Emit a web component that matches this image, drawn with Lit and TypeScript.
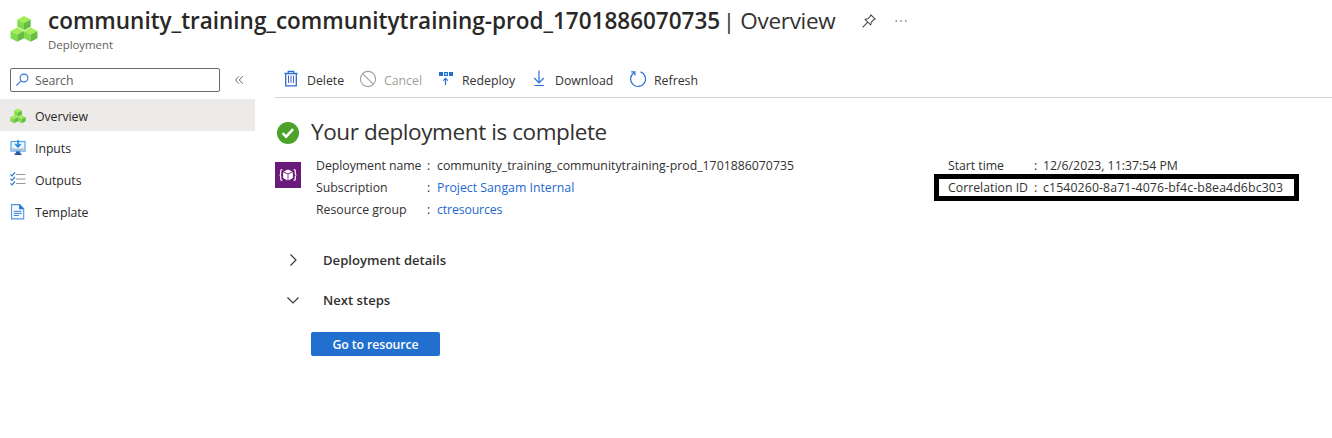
import { LitElement, html, css, svg } from "lit";
import { customElement } from "lit/decorators.js";

const cube = (x: number, y: number) => svg`
  <g transform="translate(${x} ${y})">
    <path d="M7 0 L14 3.6 L7 7.3 L0 3.6Z" fill="#a4ee55"/>
    <path d="M0 3.6 L7 7.3 V15 L0 11.3Z" fill="#7fdc4c"/>
    <path d="M14 3.6 L7 7.3 V15 L14 11.3Z" fill="#68bd40"/>
  </g>`;

const cubes = (size: number) => html`
  <svg width=${size} height=${size} viewBox="-.6 -.6 29.200 29.200">${cube(7, 0.4)}${cube(0, 12.4)}${cube(14, 12.4)}</svg>`;

const inputsIcon = html`
  <svg width="16" height="16" viewBox="0 0 16 16">
    <path d="M6 11h4l.3 3H5.700z" fill="#2b5db0"/>
    <rect x="4.500" y="13.500" width="7" height="1.500" fill="#2b50a0"/>
    <rect x="1" y="1.500" width="14" height="9.500" fill="#e9f4fd" stroke="#55a5e6" stroke-width="1.200"/>
    <path d="M3 8v1.300h10V8" fill="none" stroke="#a8a8a8" stroke-width="1"/>
    <path d="M8 0v6M5.300 4 8 6.800 10.700 4" fill="none" stroke="#1a86dc" stroke-width="1.500"/>
  </svg>`;

const outputsIcon = html`
  <svg width="16" height="16" viewBox="0 0 16 16">
    <path d="M6 2.500h9.500M6 7h9.500M6 11.500h9.500" stroke="#999" stroke-width="1.200"/>
    <path d="M.4 2.300 2 3.900 5 .5M.4 6.800 2 8.400 5 5M.4 11.300 2 12.900 5 9.500" fill="none" stroke="#2f78d8" stroke-width="1.200"/>
  </svg>`;

const templateIcon = html`
  <svg width="16" height="16" viewBox="0 0 16 16">
    <path d="M1.500.6h8.300l3.900 4v10.300H1.500z" fill="#f3f9ff" stroke="#5495e0" stroke-width="1.100"/>
    <path d="M9.200.3 14 5.200H9.200z" fill="#1f6fd0"/>
    <path d="M3.800 7.300h7.800M3.800 9.400h7.800M3.800 11.500h5" stroke="#3b82d9" stroke-width="1"/>
  </svg>`;

const trashIcon = html`
  <svg width="16" height="18" viewBox="0 0 16 18">
    <path d="M1.500 3.500h13M5.300 3.500V1.400h5.400v2.100M2.700 3.500V15.900h10.600V3.500" fill="none" stroke="#2b6fd0" stroke-width="1.300"/>
    <path d="M5.500 5.500v7.500M8 5.500v7.500M10.500 5.500v7.500" stroke="#4a62c8" stroke-width="1"/>
  </svg>`;

const cancelIcon = html`
  <svg width="18" height="18" viewBox="0 0 18 18" fill="none" stroke="#a19f9d" stroke-width="1.100">
    <circle cx="9" cy="9" r="7.600"/><path d="m3.600 3.600 10.800 10.800"/>
  </svg>`;

const redeployIcon = html`
  <svg width="16" height="16" viewBox="0 0 16 16">
    <path d="M1 1h4v4H1zM11 1h4v4h-4z" fill="#1f6fd0"/>
    <rect x="6.600" y="1.600" width="2.800" height="2.800" fill="none" stroke="#1f6fd0" stroke-width="1.200"/>
    <path d="M7.500 14V7.500M5.200 9.700 7.500 7.400l2.300 2.300" fill="none" stroke="#2b6fd0" stroke-width="1.200"/>
  </svg>`;

const downloadIcon = html`
  <svg width="16" height="18" viewBox="0 0 16 18" fill="none" stroke="#2b72d4" stroke-width="1.200">
    <path d="M8 .5v12.300M3.200 8 8 12.800 12.800 8M3.500 15.500h9.500"/>
  </svg>`;

const refreshIcon = html`
  <svg width="18" height="18" viewBox="0 0 18 18" fill="none" stroke="#2b72d4" stroke-width="1.200">
    <path d="M11.500 1.900A7.500 7.500 0 1 1 5 2.700M2.200 1.800h3.700v3.700"/>
  </svg>`;

const searchIcon = html`
  <svg width="14" height="14" viewBox="0 0 14 14" fill="none" stroke="#2b72d4" stroke-width="1.100">
    <circle cx="8" cy="5" r="3.900"/><path d="M5.200 7.800.3 12.700"/>
  </svg>`;

const collapseIcon = html`
  <svg width="8" height="8" viewBox="0 0 8 8" fill="none" stroke="#605e5c" stroke-width=".9">
    <path d="M3.800.3.500 4l3.300 3.700M7.600.3 4.300 4l3.300 3.700"/>
  </svg>`;

const pinIcon = html`
  <svg width="14" height="14" viewBox="0 0 14 14" fill="none" stroke="#444" stroke-width="1.050" stroke-linejoin="round">
    <path d="M8.900.8 13.200 5.100 11.700 5.700 9.300 8.100 8.700 11 3 5.300 5.900 4.700 8.300 2.300zM5.800 8.200.6 13.400"/>
  </svg>`;

const moreIcon = html`
  <svg width="12" height="4" viewBox="0 0 12 4" fill="#555">
    <circle cx="1.200" cy="2" r=".8"/><circle cx="6" cy="2" r=".8"/><circle cx="10.800" cy="2" r=".8"/>
  </svg>`;

const successIcon = html`
  <svg width="22" height="22" viewBox="0 0 22 22">
    <circle cx="11" cy="11" r="11" fill="#4ba32a"/>
    <path d="m5.600 11.200 3.500 3.500 7-7.500" fill="none" stroke="#fff" stroke-width="2.500"/>
  </svg>`;

const resourceIcon = html`
  <svg width="26" height="26" viewBox="0 0 26 26">
    <rect width="26" height="26" fill="#6a1a78"/>
    <path d="M7.400 7.600H7q-1.300 0-1.300 1.300v2.600Q5.700 13 4.500 13q1.200 0 1.200 1.500v2.600q0 1.300 1.300 1.300h.4M18.600 7.600h.4q1.300 0 1.300 1.300v2.600q0 1.500 1.200 1.500-1.200 0-1.200 1.500v2.600q0 1.300-1.300 1.300h-.4" fill="none" stroke="#fff" stroke-width="1.200"/>
    <path d="M13 7.500l4.400 2L13 11.500 8.600 9.500zM8.100 10.200l4.500 2v6.300l-4.500-2.400zM17.900 10.200l-4.500 2v6.300l4.500-2.400z" fill="#fff"/>
  </svg>`;

const nav = [
  { label: "Overview", icon: cubes(16), selected: true },
  { label: "Inputs", icon: inputsIcon },
  { label: "Outputs", icon: outputsIcon },
  { label: "Template", icon: templateIcon },
];

@customElement("app-root")
export class AppRoot extends LitElement {
  static styles = css`
    :host {
      display: block;
      height: 438px;
      overflow: hidden;
      background: #fff;
      color: #323130;
      font: 12.3px/22px "Open Sans", "Noto Sans", sans-serif;
      white-space: nowrap;
    }
    svg { display: block; flex: none; overflow: visible; }
    .header { display: flex; height: 66px; box-sizing: border-box; padding: 6px 0 0 10px; }
    .logo { padding-top: 9px; width: 38px; }
    .title-row { display: flex; align-items: center; height: 29px; font-size: 22.5px; line-height: 29px; }
    .title { margin: 0; font-size: 22.5px; font-weight: 600; color: #292827; letter-spacing: -0.005px; }
    .page { letter-spacing: -0.3px; width: 112px; margin-left: 2.500px; }
    .pin { margin-left: 27px; }
    .more { margin-left: 19px; }
    .subtitle { font-size: 11.4px; line-height: 18px; color: #605e5c; padding-top: 1px; }
    .body { display: flex; }
    .side { width: 255px; margin-right: 20px; flex: none; }
    .search-row { display: flex; align-items: center; padding: 2px 0 7px 10px; }
    .search { display: flex; align-items: center; gap: 5px; box-sizing: border-box; width: 210px; height: 24px; border: 1px solid #6b6967; border-radius: 2px; padding-left: 5px; color: #605e5c; letter-spacing: -0.1px; }
    .search span { padding-top: 2px; }
    .collapse { margin-left: 15px; }
    .nav-item { display: flex; align-items: center; box-sizing: border-box; height: 32px; padding: 2px 0 0 10px; gap: 9px; letter-spacing: -0.05px; color: #292827; }
    .nav-item span { padding-top: 2px; }
    .selected { background: #edebe9; }
    .main { flex: 1; min-width: 0; }
    .toolbar { display: flex; height: 31px; border-bottom: 1px solid #d2d0ce; }
    .cmd { display: flex; align-items: center; height: 28px; }
    .cmd svg { margin-top: -2px; }
    .cmd span { padding-top: 2px; }
    .disabled { color: #a19f9d; }
    .status { display: flex; align-items: center; height: 29px; padding: 19px 0 0 2px; gap: 12px; }
    .status svg { margin-top: 3px; }
    .status h2 { margin: 0; font-size: 22.5px; line-height: 29px; font-weight: 400; letter-spacing: -0.41px; }
    .details { display: flex; padding-top: 9px; }
    .kind { width: 41px; padding-top: 7px; }
    .grid { display: grid; grid-template-columns: 111px 10px auto; grid-auto-rows: 22px; align-content: start; }
    .left { width: 632px; }
    .right { grid-template-columns: 86px 9px auto; position: relative; }
    .right .id { letter-spacing: 0.115px; }
    .tight { letter-spacing: -0.04px; }
    .link { color: #2368d0; }
    .link-tight { letter-spacing: -0.13px; }
    .mark { position: absolute; left: -14px; top: 19px; width: 355px; height: 17px; border: 5px solid #000; }
    .section { display: flex; align-items: center; height: 40px; font-size: 13.1px; font-weight: 600; }
    .first { margin-top: 19px; }
    .chev { width: 36px; padding-left: 12px; }
    .go { display: block; margin: 12px 0 0 36px; width: 129px; height: 24px; padding: 1px 0 0; border: 0; border-radius: 2px; background: #2170cf; color: #fff; font: 600 12.3px/23px "Open Sans", sans-serif; letter-spacing: -0.1px; }
  `;

  render() {
    return html`
      <header class="header">
        <div class="logo">${cubes(28)}</div>
        <div>
          <div class="title-row">
            <h1 class="title">community_training_communitytraining-prod_1701886070735</h1>
            <span class="page">| Overview</span>
            <span class="pin">${pinIcon}</span>
            <span class="more">${moreIcon}</span>
          </div>
          <div class="subtitle">Deployment</div>
        </div>
      </header>
      <div class="body">
        <nav class="side">
          <div class="search-row">
            <div class="search">${searchIcon}<span>Search</span></div>
            <span class="collapse">${collapseIcon}</span>
          </div>
          ${nav.map((n) => html`<div class="nav-item ${n.selected ? "selected" : ""}">${n.icon}<span>${n.label}</span></div>`)}
        </nav>
        <main class="main">
          <div class="toolbar">
            ${this.command(trashIcon, "Delete", 8, 8, 37)}
            ${this.command(cancelIcon, "Cancel", 15, 7, 38, true)}
            ${this.command(redeployIcon, "Redeploy", 16, 8, 53)}
            ${this.command(downloadIcon, "Download", 16, 8, 58)}
            ${this.command(refreshIcon, "Refresh", 16, 7, 43)}
          </div>
          <div class="status">${successIcon}<h2>Your deployment is complete</h2></div>
          <div class="details">
            <div class="kind">${resourceIcon}</div>
            <div class="grid left">
              <span class="tight">Deployment name</span><span>:</span><span>community_training_communitytraining-prod_1701886070735</span>
              <span>Subscription</span><span>:</span><span class="link">Project Sangam Internal</span>
              <span>Resource group</span><span>:</span><span class="link link-tight">ctresources</span>
            </div>
            <div class="grid right">
              <span class="tight">Start time</span><span>:</span><span>12/6/2023, 11:37:54 PM</span>
              <span>Correlation ID</span><span>:</span><span class="id">c1540260-8a71-4076-bf4c-b8ea4d6bc303</span>
              <div class="mark"></div>
            </div>
          </div>
          <div class="section first">
            <span class="chev"><svg width="12" height="12" viewBox="0 0 12 12" fill="none" stroke="#323130" stroke-width="1.100"><path d="m3.500.5 5.500 5.500-5.500 5.500"/></svg></span>Deployment details
          </div>
          <div class="section">
            <span class="chev"><svg width="12" height="12" viewBox="0 0 12 12" fill="none" stroke="#323130" stroke-width="1.100"><path d="m.5 3.500 5.500 5.500 5.500-5.500"/></svg></span>Next steps
          </div>
          <button class="go">Go to resource</button>
        </main>
      </div>`;
  }

  private command(icon: unknown, label: string, before: number, gap: number, width: number, disabled = false) {
    return html`<div class="cmd ${disabled ? "disabled" : ""}" style="padding-left:${before}px;gap:${gap}px">${icon}<span style="width:${width}px">${label}</span></div>`;
  }
}
